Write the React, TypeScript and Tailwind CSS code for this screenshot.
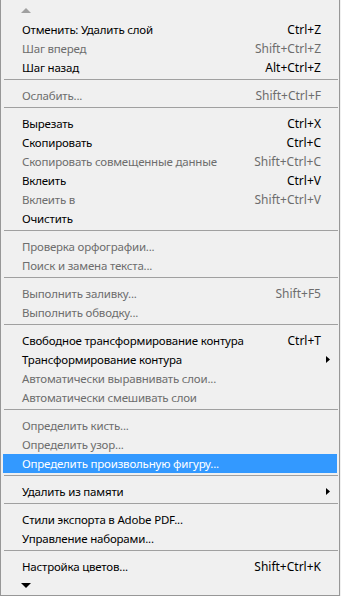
import React from 'react';

type Item =
  | { type: 'sep' }
  | { type: 'item'; label: string; shortcut?: string; disabled?: boolean; submenu?: boolean; active?: boolean };

const items: Item[] = [
  { type: 'item', label: 'Отменить: Удалить слой', shortcut: 'Ctrl+Z' },
  { type: 'item', label: 'Шаг вперед', shortcut: 'Shift+Ctrl+Z', disabled: true },
  { type: 'item', label: 'Шаг назад', shortcut: 'Alt+Ctrl+Z' },
  { type: 'sep' },
  { type: 'item', label: 'Ослабить...', shortcut: 'Shift+Ctrl+F', disabled: true },
  { type: 'sep' },
  { type: 'item', label: 'Вырезать', shortcut: 'Ctrl+X' },
  { type: 'item', label: 'Скопировать', shortcut: 'Ctrl+C' },
  { type: 'item', label: 'Скопировать совмещенные данные', shortcut: 'Shift+Ctrl+C', disabled: true },
  { type: 'item', label: 'Вклеить', shortcut: 'Ctrl+V' },
  { type: 'item', label: 'Вклеить в', shortcut: 'Shift+Ctrl+V', disabled: true },
  { type: 'item', label: 'Очистить' },
  { type: 'sep' },
  { type: 'item', label: 'Проверка орфографии...', disabled: true },
  { type: 'item', label: 'Поиск и замена текста...', disabled: true },
  { type: 'sep' },
  { type: 'item', label: 'Выполнить заливку...', shortcut: 'Shift+F5', disabled: true },
  { type: 'item', label: 'Выполнить обводку...', disabled: true },
  { type: 'sep' },
  { type: 'item', label: 'Свободное трансформирование контура', shortcut: 'Ctrl+T' },
  { type: 'item', label: 'Трансформирование контура', submenu: true },
  { type: 'item', label: 'Автоматически выравнивать слои...', disabled: true },
  { type: 'item', label: 'Автоматически смешивать слои', disabled: true },
  { type: 'sep' },
  { type: 'item', label: 'Определить кисть...', disabled: true },
  { type: 'item', label: 'Определить узор...', disabled: true },
  { type: 'item', label: 'Определить произвольную фигуру...', active: true },
  { type: 'sep' },
  { type: 'item', label: 'Удалить из памяти', submenu: true },
  { type: 'sep' },
  { type: 'item', label: 'Стили экспорта в Adobe PDF...' },
  { type: 'item', label: 'Управление наборами...' },
  { type: 'sep' },
  { type: 'item', label: 'Настройка цветов...', shortcut: 'Shift+Ctrl+K' },
];

export default function App() {
  return (
    <div
      className="w-[341px] h-[596px] bg-[#f0f0f0] text-[12px] leading-none"
      style={{ fontFamily: '"Noto Sans", "Open Sans", sans-serif' }}
    >
      <div className="w-[340px] h-[596px] border-l border-r border-b border-[#979797] flex flex-col">
        <div className="h-[20px] flex items-center pl-[20px]">
          <svg width="10" height="5" viewBox="0 0 10 5">
            <path d="M0 5 L5 0 L10 5 Z" fill="#a0a0a0" />
          </svg>
        </div>
        {items.map((it, i) =>
          it.type === 'sep' ? (
            <div key={i} className="h-[9px] pt-[2px] pl-[3px] pr-[1px]">
              <div className="h-px bg-[#a0a0a0]" />
            </div>
          ) : (
            <div
              key={i}
              className={`h-[19px] mx-[2px] flex items-center pl-[19px] pr-[16px] ${
                it.active ? 'bg-[#3399ff] text-white' : it.disabled ? 'text-[#6d6d6d]' : 'text-black'
              }`}
            >
              <span className="flex-1 whitespace-nowrap text-[11.5px] tracking-[-0.2px]">{it.label}</span>
              {it.shortcut && <span className="whitespace-nowrap">{it.shortcut}</span>}
              {it.submenu && (
                <svg width="4" height="7" viewBox="0 0 4 7" className="-mr-[9px]">
                  <path d="M0 0 L4 3.5 L0 7 Z" fill="#000" />
                </svg>
              )}
            </div>
          )
        )}
        <div className="flex-1 flex items-center pl-[20px]">
          <svg width="10" height="5" viewBox="0 0 10 5">
            <path d="M0 0 L10 0 L5 5 Z" fill="#000" />
          </svg>
        </div>
      </div>
    </div>
  );
}
